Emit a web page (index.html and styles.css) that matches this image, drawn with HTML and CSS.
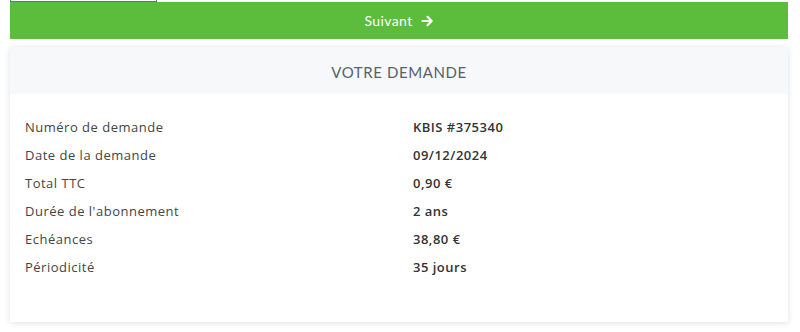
FILE: index.html
```html
<!DOCTYPE html>
<html>
<head>
  <title>Votre demande</title>
  <link rel="stylesheet" href="styles.css">
</head>
<body>
  <div class="page">
    <div class="prev-box"></div>
    <button class="next-btn" type="button">
      Suivant
      <svg class="arrow" width="13" height="12" viewBox="0 0 13 12">
        <path d="M1.5 6h9M6.5 1.8L10.7 6l-4.2 4.2" fill="none" stroke="#fff" stroke-width="2.2" stroke-linecap="round" stroke-linejoin="round"/>
      </svg>
    </button>
    <div class="card">
      <div class="card-header">VOTRE DEMANDE</div>
      <div class="card-body">
        <div class="row"><span class="label">Numéro de demande</span><span class="value">KBIS #375340</span></div>
        <div class="row"><span class="label">Date de la demande</span><span class="value">09/12/2024</span></div>
        <div class="row"><span class="label">Total TTC</span><span class="value">0,90 €</span></div>
        <div class="row"><span class="label">Durée de l'abonnement</span><span class="value">2 ans</span></div>
        <div class="row"><span class="label">Echéances</span><span class="value">38,80 €</span></div>
        <div class="row"><span class="label">Périodicité</span><span class="value">35 jours</span></div>
      </div>
    </div>
  </div>
</body>
</html>
```

FILE: styles.css
```css
body {
  margin: 0;
  font-family: "Lato", sans-serif;
  background-color: #fff;
  height: 332px;
  overflow: hidden;
}
.page {
  padding: 0 12px 0 10px;
}
.prev-box {
  width: 145px;
  height: 1px;
  border: 1px solid #3a7fb0;
  border-top: none;
}
.next-btn {
  display: flex;
  justify-content: center;
  align-items: center;
  gap: 8px;
  width: 100%;
  height: 37px;
  margin: 0;
  border: none;
  background-color: #5bbd3b;
  color: #fff;
  font-family: "Lato", sans-serif;
  font-size: 14px;
  letter-spacing: 0.4px;
  cursor: pointer;
}
.next-btn .arrow {
  margin-top: 1px;
}
.card {
  margin-top: 8px;
  background-color: #fff;
  box-shadow: 0px 1px 6px rgba(0, 0, 0, 0.12);
}
.card-header {
  height: 47px;
  line-height: 50px;
  text-align: center;
  background-color: #f6f8fa;
  color: #55626b;
  font-size: 15px;
  letter-spacing: 0.6px;
}
.card-body {
  padding: 19px 15px 41px 15px;
  font-family: "Open Sans", sans-serif;
}
.row {
  display: flex;
  height: 28px;
  align-items: center;
  font-size: 13px;
  letter-spacing: 0.5px;
}
.label {
  width: 388px;
  color: #444;
}
.value {
  color: #333;
  font-weight: 600;
}
```
